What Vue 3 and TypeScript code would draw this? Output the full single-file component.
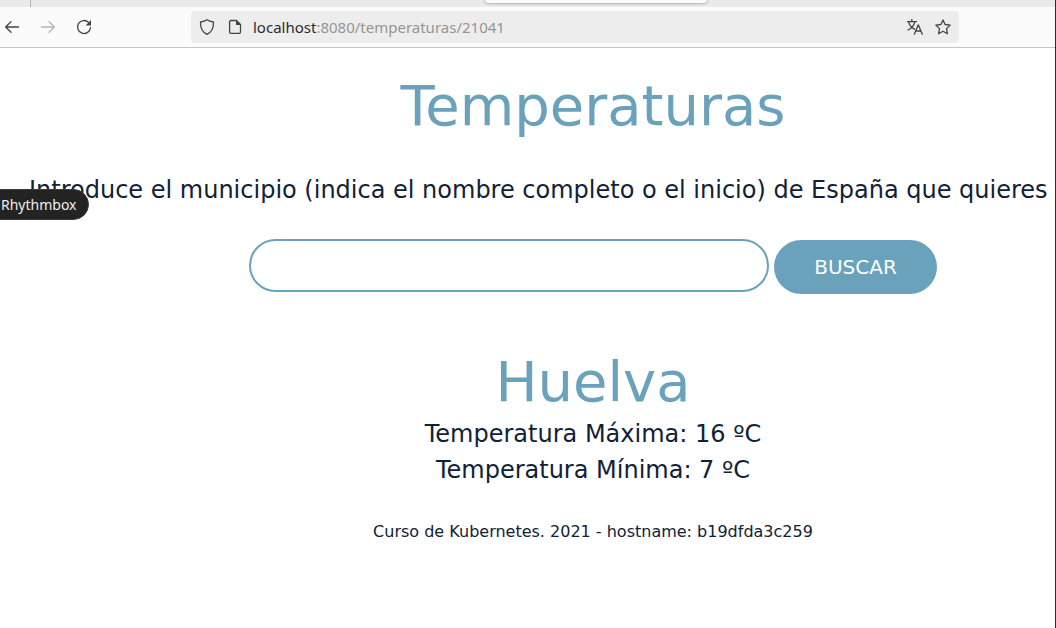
<script setup lang="ts">
import { ref } from 'vue'

const query = ref('')
const town = { name: 'Huelva', max: 16, min: 7 }
const host = 'b19dfda3c259'
</script>

<template>
  <div class="window">
    <div class="tabs">
      <div class="tab-edge"></div>
      <div class="tab-active"></div>
    </div>

    <header class="toolbar">
      <nav class="nav">
        <button type="button" class="icon" aria-label="Atrás">
          <svg width="16" height="16" viewBox="0 0 16 16"><path d="M14.500 8H1.800M7 2.800L1.600 8 7 13.200" /></svg>
        </button>
        <button type="button" class="icon faded" aria-label="Adelante">
          <svg width="16" height="16" viewBox="0 0 16 16"><path d="M1.500 8h12.700M9 2.800L14.400 8 9 13.200" /></svg>
        </button>
        <button type="button" class="icon" aria-label="Recargar">
          <svg width="16" height="16" viewBox="0 0 16 16">
            <path d="M12.600 3.400A6.500 6.500 0 1 0 14.500 8.500" />
            <path class="solid" d="M15 1v5.400H9.600z" />
          </svg>
        </button>
      </nav>
      <div class="address">
        <button type="button" class="icon" aria-label="Protección">
          <svg width="16" height="16" viewBox="0 0 16 16"><path d="M8 .8c1.6 1.1 3.8 1.8 6.400 2.200C14.800 8.400 12.600 13 8 15.300 3.400 13 1.200 8.400 1.600 3 4.200 2.600 6.400 1.900 8 .8z" /></svg>
        </button>
        <button type="button" class="icon" aria-label="Información del sitio">
          <svg width="16" height="16" viewBox="0 0 16 16">
            <path d="M4 1.500h5.500l4 4V13a1.400 1.400 0 0 1-1.400 1.400H4A1.400 1.400 0 0 1 2.600 13V3A1.400 1.400 0 0 1 4 1.500z" />
            <path class="solid" d="M9 1v5h5z" />
          </svg>
        </button>
        <div class="url"><span>localhost</span>:8080/temperaturas/21041</div>
        <button type="button" class="icon" aria-label="Traducir">
          <svg width="16" height="16" viewBox="0 0 16 16">
            <path d="M0 2.600h9.500M4.800.6v2M1.600 2.800c1 3.600 3.200 6 6 7.400M7.800 2.800C7 6.400 4.600 9.300 1 11M7.300 15.200l4-9.400 4 9.400M8.700 12h5.200" />
          </svg>
        </button>
        <button type="button" class="icon" aria-label="Añadir marcador">
          <svg width="16" height="16" viewBox="0 0 16 16"><path d="M8 .9l2.100 4.600 5.100.6-3.700 3.500.9 5.100L8 12.300l-4.400 2.400.9-5.100L.8 6.100l5.100-.6z" /></svg>
        </button>
      </div>
    </header>

    <main class="page">
      <h1>Temperaturas</h1>
      <div class="intro-row">
        <label class="intro" for="municipio">Introduce el municipio (indica el nombre completo o el inicio) de España que quieres</label>
        <div class="tooltip" role="tooltip">Rhythmbox</div>
      </div>
      <form class="search" @submit.prevent>
        <input id="municipio" v-model="query" type="text" />
        <button type="submit">BUSCAR</button>
      </form>
      <h2>{{ town.name }}</h2>
      <p class="reading">Temperatura Máxima: {{ town.max }} ºC</p>
      <p class="reading">Temperatura Mínima: {{ town.min }} ºC</p>
      <footer>Curso de Kubernetes. 2021 - hostname: {{ host }}</footer>
    </main>
  </div>
</template>

<style>
body {
  margin: 0;
  background: #fff;
}
</style>

<style scoped>
* {
  box-sizing: border-box;
}

.window {
  min-height: 100vh;
  overflow: hidden;
  border-right: 1px solid #2c2c2e;
  background: #fff;
  color: #102235;
  font-family: "DejaVu Sans", Verdana, sans-serif;
}

.tabs {
  display: flex;
  height: 7px;
  background: #eaeaea;
}

.tab-edge {
  width: 31px;
  margin-right: 454px;
  border-right: 1px solid #b4b4b4;
}

.tab-active {
  width: 222px;
  height: 3px;
  border-radius: 0 0 4px 4px;
  background: #fbfbfb;
  box-shadow: 0 0 3px rgba(0, 0, 0, 0.5);
}

.toolbar {
  display: flex;
  align-items: center;
  height: 41px;
  padding: 0 96px 0 4px;
  border-bottom: 1px solid #c6c6c6;
  background: #fbfbfb;
}

.nav {
  display: flex;
  gap: 20px;
  width: 187px;
}

.icon {
  display: block;
  flex: none;
  width: 16px;
  height: 16px;
  padding: 0;
  border: 0;
  background: none;
  color: #444;
}

.icon svg {
  display: block;
  fill: none;
  stroke: currentColor;
  stroke-width: 1.3;
  stroke-linecap: round;
  stroke-linejoin: round;
}

.icon .solid {
  fill: currentColor;
  stroke: none;
}

.icon.faded {
  color: #b4b4b4;
}

.address {
  display: flex;
  flex: 1;
  align-items: center;
  gap: 12px;
  height: 32px;
  padding: 0 8px;
  border-radius: 4px;
  background: #ededed;
}

.url {
  flex: 1;
  margin-left: -2px;
  color: #959595;
  font: 15px/20px "Noto Sans", "Open Sans", sans-serif;
  white-space: nowrap;
}

.url span {
  color: #2c2c2c;
}

/* The document is wider than the visible window. */
.page {
  margin-right: -102px;
  padding: 24px 0 32px 29px;
  text-align: center;
}

h1,
h2 {
  margin: 0;
  color: #6aa2bc;
  font-size: 56px;
  font-weight: 400;
  line-height: 67px;
}

.intro-row {
  position: relative;
  margin: 33px 0 31px;
  text-align: left;
}

.intro {
  display: block;
  font-size: 24px;
  line-height: 36px;
  white-space: nowrap;
}

.tooltip {
  position: absolute;
  top: 17px;
  left: -45px;
  padding: 5px 11px 5px 16px;
  border: 1px solid #3a3a3a;
  border-radius: 16px;
  background: #232323;
  color: #eee;
  font: 14px/19px "Noto Sans", "Open Sans", sans-serif;
}

.search {
  display: flex;
  justify-content: center;
  gap: 5px;
  margin-bottom: 54px;
}

.search input {
  width: 520px;
  height: 53px;
  padding: 0 24px;
  border: 2px solid #6aa2bc;
  border-radius: 27px;
  outline: 0;
  background: #fff;
  color: inherit;
  font: inherit;
  font-size: 20px;
}

.search button {
  height: 54px;
  margin-top: 1px;
  padding: 0 40px;
  border: 0;
  border-radius: 27px;
  background: #6aa2bc;
  color: #fff;
  font: inherit;
  font-size: 20px;
}

h2 {
  margin-bottom: 1px;
}

.reading {
  margin: 0;
  font-size: 24px;
  line-height: 36px;
}

footer {
  margin-top: 32px;
  font-size: 16px;
  line-height: 24px;
}
</style>
